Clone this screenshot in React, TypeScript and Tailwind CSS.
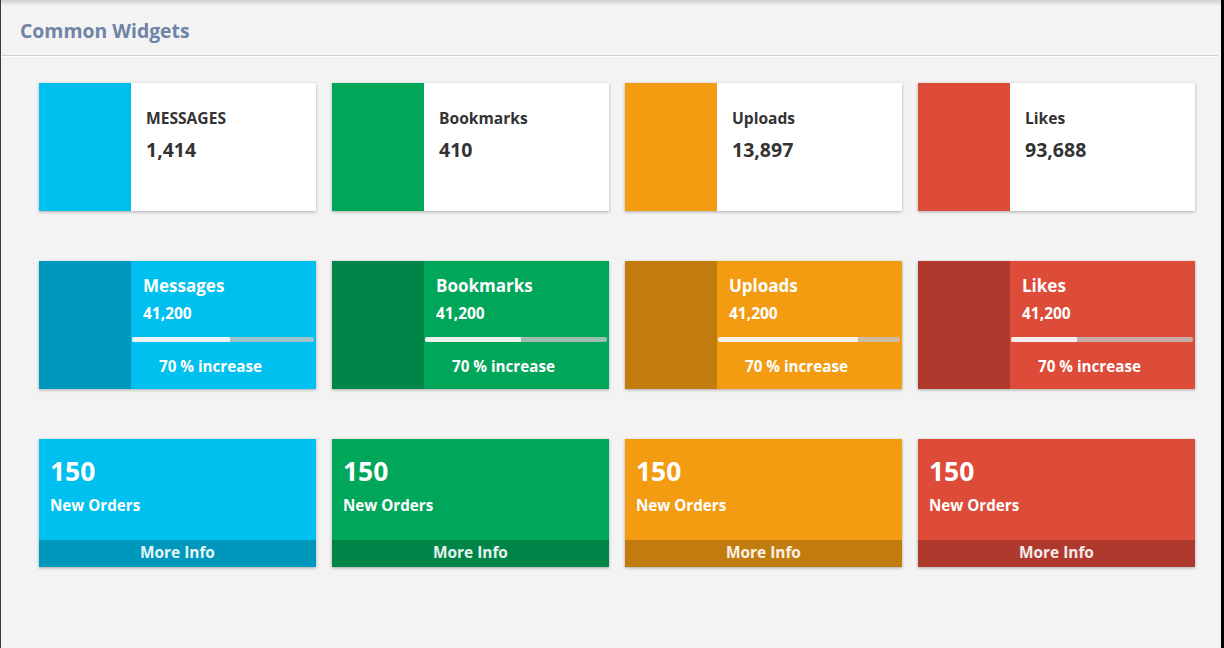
import React from "react";

const colors = [
  { main: "bg-[#00c0ef]", dark: "bg-[#0097bc]" },
  { main: "bg-[#00a65a]", dark: "bg-[#008548]" },
  { main: "bg-[#f39c12]", dark: "bg-[#c27c0e]" },
  { main: "bg-[#dd4b39]", dark: "bg-[#b0392d]" },
];

const row1 = [
  { label: "MESSAGES", value: "1,414" },
  { label: "Bookmarks", value: "410" },
  { label: "Uploads", value: "13,897" },
  { label: "Likes", value: "93,688" },
];

const row2 = [
  { label: "Messages", pct: 54 },
  { label: "Bookmarks", pct: 53 },
  { label: "Uploads", pct: 77 },
  { label: "Likes", pct: 36 },
];

export default function App() {
  return (
    <div
      className="w-[1224px] h-[648px] flex overflow-hidden"
      style={{ fontFamily: '"Open Sans", "Noto Sans", sans-serif' }}
    >
      <div className="w-[1px] bg-[#2c3e50]" />
      <div className="relative flex-1 bg-[#f3f3f3] flex flex-col">
        <div className="absolute top-0 left-0 right-0 h-[6px] bg-gradient-to-b from-[#d0d0d0] to-[#f3f3f3]" />
        <div className="h-[55px] flex items-center pl-[19px] pt-[7px]">
          <h1 className="text-[19.4px] font-bold text-[#7083a6] leading-none">Common Widgets</h1>
        </div>
        <div className="ml-[1px] mr-[3px] h-[1px] bg-[#d0d0d0]" />
        <div className="ml-[1px] mr-[3px] h-[1px] bg-white" />
        <div className="pl-[38px] pt-[26px] flex flex-col gap-[50px]">
          <div className="flex gap-[16px]">
            {row1.map((c, i) => (
              <div
                key={i}
                className="w-[277px] h-[128px] flex bg-white shadow-[0_1px_3px_rgba(0,0,0,0.3)]"
              >
                <div className={`w-[92px] h-full ${colors[i].main}`} />
                <div className="pl-[15px] pt-[25px] text-[#333]">
                  <div className="text-[15.6px] font-bold leading-[20px]">{c.label}</div>
                  <div className="text-[19.5px] font-bold leading-[24px] mt-[10px]">{c.value}</div>
                </div>
              </div>
            ))}
          </div>
          <div className="flex gap-[16px]">
            {row2.map((c, i) => (
              <div
                key={i}
                className={`w-[277px] h-[128px] flex shadow-[0_1px_3px_rgba(0,0,0,0.3)] ${colors[i].main}`}
              >
                <div className={`w-[92px] h-full ${colors[i].dark}`} />
                <div className="flex-1 pt-[13px] text-white">
                  <div className="pl-[12px] text-[17px] font-bold leading-[24px]">{c.label}</div>
                  <div className="pl-[12px] text-[15.5px] font-bold leading-[20px] mt-[5px]">41,200</div>
                  <div className="ml-[1px] mr-[2px] mt-[14px] h-[5px] rounded-[2px] bg-[#c4c4c4]/80 overflow-hidden">
                    <div className="h-full bg-white/80" style={{ width: `${c.pct}%` }} />
                  </div>
                  <div className="pl-[28px] mt-[14px] text-[15.2px] font-bold leading-[20px]">70 % increase</div>
                </div>
              </div>
            ))}
          </div>
          <div className="flex gap-[16px]">
            {row1.map((_, i) => (
              <div
                key={i}
                className={`w-[277px] h-[128px] flex flex-col shadow-[0_1px_3px_rgba(0,0,0,0.3)] ${colors[i].main}`}
              >
                <div className="flex-1 pl-[11px] pt-[16px] text-white">
                  <div className="text-[26.4px] font-bold leading-[32px]">150</div>
                  <div className="text-[15.2px] font-bold leading-[20px] mt-[8px]">New Orders</div>
                </div>
                <div
                  className={`h-[27px] flex items-center justify-center text-[15.4px] font-bold text-white/90 ${colors[i].dark}`}
                >
                  <span className="-mt-[2px]">More Info</span>
                </div>
              </div>
            ))}
          </div>
        </div>
      </div>
      <div className="w-[3px] bg-black" />
    </div>
  );
}
